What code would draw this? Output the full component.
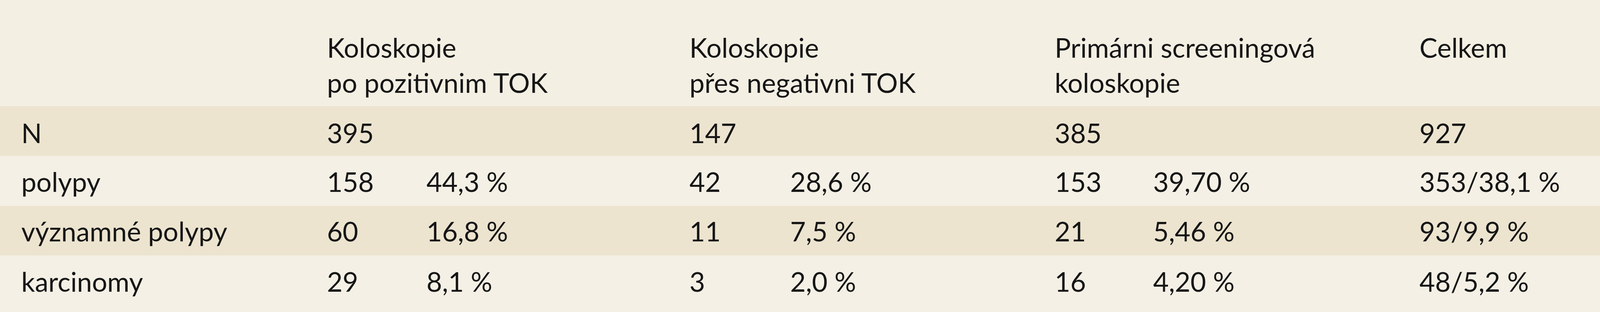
import React from "react";

const cols =
  "grid grid-cols-[minmax(0,880fr)_minmax(0,268fr)_minmax(0,708fr)_minmax(0,271fr)_minmax(0,712fr)_minmax(0,265fr)_minmax(0,717fr)_minmax(0,486fr)]";

type Row = { label: string; cells: string[]; dark: boolean; h: string; pt: string };

const rows: Row[] = [
  { label: "N", cells: ["395", "", "147", "", "385", "", "927"], dark: true, h: "h-[128px]", pt: "pt-[24px]" },
  { label: "polypy", cells: ["158", "44,3 %", "42", "28,6 %", "153", "39,70 %", "353/38,1 %"], dark: false, h: "h-[128px]", pt: "pt-[21px]" },
  { label: "významné polypy", cells: ["60", "16,8 %", "11", "7,5 %", "21", "5,46 %", "93/9,9 %"], dark: true, h: "h-[127px]", pt: "pt-[20px]" },
  { label: "karcinomy", cells: ["29", "8,1 %", "3", "2,0 %", "16", "4,20 %", "48/5,2 %"], dark: false, h: "h-[145px]", pt: "pt-[22px]" },
];

export default function App() {
  return (
    <div
      className="w-full h-[800px] overflow-hidden bg-[#f3efe3] text-[#161616] text-[69px] leading-[90px]"
      style={{ fontFamily: 'Lato, "Liberation Sans", sans-serif' }}
    >
      <div className={`${cols} h-[272px] pt-[77px] bg-[#f3efe3]`}>
        <div></div>
        <div className="col-span-2 whitespace-nowrap">
          <div>Koloskopie</div>
          <div>po pozitivnim TOK</div>
        </div>
        <div className="col-span-2 whitespace-nowrap">
          <div>Koloskopie</div>
          <div>přes negativni TOK</div>
        </div>
        <div className="col-span-2 whitespace-nowrap">
          <div>Primárni screeningová</div>
          <div>koloskopie</div>
        </div>
        <div className="whitespace-nowrap">Celkem</div>
      </div>
      {rows.map((r) => (
        <div
          key={r.label}
          className={`${cols} ${r.h} ${r.pt} ${r.dark ? "bg-[#ece4cf]" : "bg-[#f4f0e5]"}`}
        >
          <div className="pl-[6.5%] whitespace-nowrap">{r.label}</div>
          {r.cells.map((c, i) => (
            <div key={i} className="whitespace-nowrap">
              {c}
            </div>
          ))}
        </div>
      ))}
    </div>
  );
}
